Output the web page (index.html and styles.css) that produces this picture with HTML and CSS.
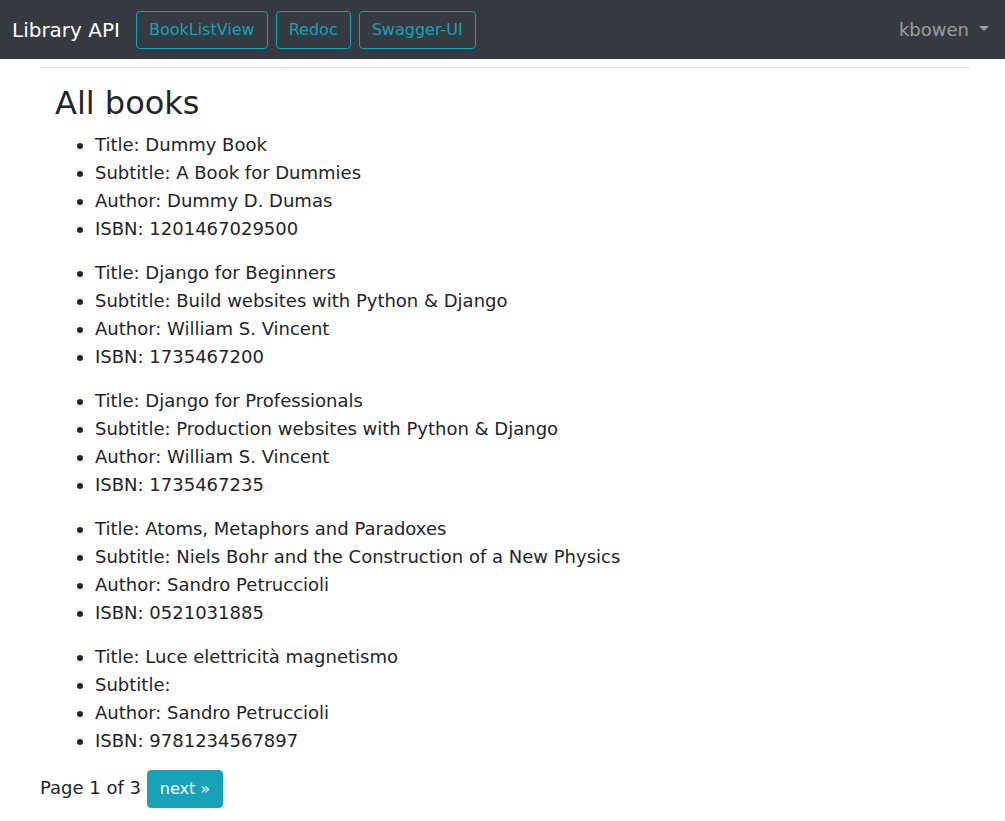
FILE: index.html
```html
<!DOCTYPE html>
<html lang="en">
<head>
<meta charset="utf-8">
<meta name="viewport" content="width=device-width, initial-scale=1">
<title>Library API</title>
<link rel="stylesheet" href="styles.css">
</head>
<body>
<nav class="navbar">
  <a class="brand" href="#">Library API</a>
  <a class="btn btn-outline" href="#">BookListView</a>
  <a class="btn btn-outline" href="#">Redoc</a>
  <a class="btn btn-outline" href="#">Swagger-UI</a>
  <button class="user-menu" type="button" aria-haspopup="true">kbowen</button>
</nav>
<main class="page">
  <section class="books">
    <h1>All books</h1>
    <ul>
      <li>Title: Dummy Book</li>
      <li>Subtitle: A Book for Dummies</li>
      <li>Author: Dummy D. Dumas</li>
      <li>ISBN: 1201467029500</li>
    </ul>
    <ul>
      <li>Title: Django for Beginners</li>
      <li>Subtitle: Build websites with Python &amp; Django</li>
      <li>Author: William S. Vincent</li>
      <li>ISBN: 1735467200</li>
    </ul>
    <ul>
      <li>Title: Django for Professionals</li>
      <li>Subtitle: Production websites with Python &amp; Django</li>
      <li>Author: William S. Vincent</li>
      <li>ISBN: 1735467235</li>
    </ul>
    <ul>
      <li>Title: Atoms, Metaphors and Paradoxes</li>
      <li>Subtitle: Niels Bohr and the Construction of a New Physics</li>
      <li>Author: Sandro Petruccioli</li>
      <li>ISBN: 0521031885</li>
    </ul>
    <ul>
      <li>Title: Luce elettricità magnetismo</li>
      <li>Subtitle:</li>
      <li>Author: Sandro Petruccioli</li>
      <li>ISBN: 9781234567897</li>
    </ul>
  </section>
  <div class="pagination">
    <span>Page 1 of 3</span>
    <a class="btn btn-info" href="#">next »</a>
  </div>
</main>
</body>
</html>
```
FILE: styles.css
```css
* { box-sizing: border-box; }

body {
  margin: 0;
  font-family: "DejaVu Sans", sans-serif;
  font-size: 18px;
  line-height: 28px;
  color: #212529;
  background: #fff;
}

.navbar {
  display: flex;
  align-items: center;
  gap: 8px;
  padding: 11px 16px 10px 12px;
  background: #343a40;
}

.brand {
  margin-right: 8px;
  font-size: 20px;
  color: #fff;
  text-decoration: none;
}

.btn {
  display: inline-block;
  padding: 6px 12px;
  border: 1px solid #17a2b8;
  border-radius: 4px;
  font-size: 16px;
  line-height: 24px;
  vertical-align: middle;
  text-decoration: none;
}

.btn-outline { color: #17a2b8; }

.btn-info {
  color: #fff;
  background: #17a2b8;
}

.user-menu {
  margin-left: auto;
  padding: 0;
  border: 0;
  background: none;
  font: inherit;
  color: rgba(255, 255, 255, 0.5);
}

.user-menu::after {
  content: "";
  display: inline-block;
  margin-left: 10px;
  vertical-align: 5px;
  border-top: 5px solid;
  border-right: 5px solid transparent;
  border-left: 5px solid transparent;
}

.page {
  margin: 8px 35px 0 40px;
  border-top: 1px solid #dee2e6;
}

.books { padding: 16px 15px 0; }

h1 {
  margin: 0 0 9px;
  font-size: 32px;
  font-weight: 400;
  line-height: 38px;
}

ul {
  margin: 0 0 16px;
  padding-left: 40px;
}

ul:last-child { margin-bottom: 15px; }
```
